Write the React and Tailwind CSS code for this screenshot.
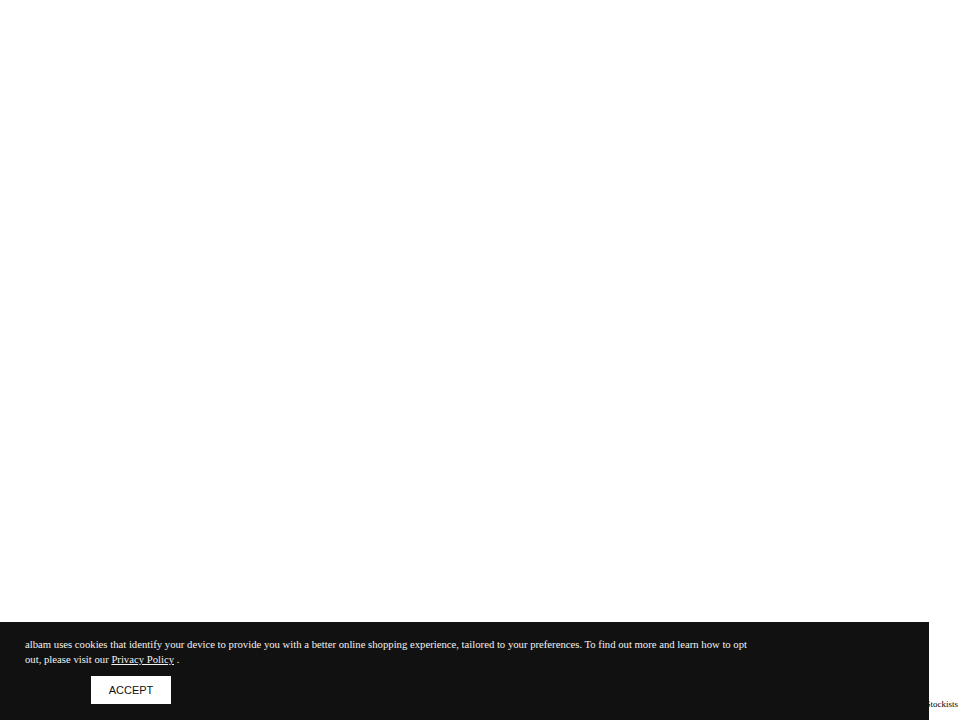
export default function App() {
  return (
    <div className="relative h-[720px] w-[960px] overflow-hidden bg-white" style={{ fontFamily: '"Liberation Serif", serif' }}>
      <div className="flex h-full flex-col justify-end items-end">
        <a className="mb-[11px] mr-[2px] text-[9px] leading-[10px] text-black">Stockists</a>
      </div>
      <div className="absolute bottom-0 left-0 h-[98px] w-[929px] bg-[#111111] pl-[25px] pt-[15px]">
        <p className="w-[728px] text-[10.7px] leading-[15px] text-[#f2f2f2]">
          albam uses cookies that identify your device to provide you with a better online shopping experience, tailored to your preferences. To find out more and learn how to opt out, please visit our{' '}
          <a className="underline">Privacy Policy</a> .
        </p>
        <button
          type="button"
          className="ml-[66px] mt-[9px] h-[28px] w-[80px] bg-white text-[11px] text-[#111]"
          style={{ fontFamily: '"Liberation Sans", sans-serif' }}
        >
          ACCEPT
        </button>
      </div>
    </div>
  )
}
